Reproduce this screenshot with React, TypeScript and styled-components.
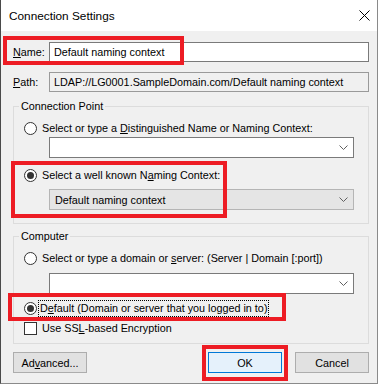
import React from "react";
import styled, { createGlobalStyle } from "styled-components";

const FONT = `"Liberation Sans", Arial, sans-serif`;

const Global = createGlobalStyle`
  html, body { margin: 0; padding: 0; background: #ffffff; }
  body { font-family: ${FONT}; font-size: 10.8px; color: #000; }
  * { box-sizing: border-box; }
`;

const Window = styled.div`
  position: relative;
  width: 378px;
  height: 384px;
  background: #f0f0f0;
  border-left: 1px solid #4a4a4a;
  border-right: 1px solid #8a8a8a;
  border-bottom: 1px solid #8a8a8a;
  display: flex;
  flex-direction: column;
  font-family: ${FONT};
  font-size: 10.8px;
`;

const TitleBar = styled.div`
  height: 31px;
  background: #ffffff;
  display: flex;
  align-items: center;
  justify-content: space-between;
  padding: 0 7px 0 8px;
  font-size: 11.8px;
`;

const Body = styled.div`
  display: flex;
  flex-direction: column;
  padding: 0 8px 0 12px;
`;

const FieldRow = styled.div<{ $mt: number }>`
  display: flex;
  align-items: center;
  margin-top: ${(p) => p.$mt}px;
`;

const FieldLabel = styled.span`
  width: 36px;
  line-height: 16px;
`;

const TextBox = styled.div<{ $readonly?: boolean }>`
  flex: 1;
  height: 20px;
  display: flex;
  align-items: center;
  padding-left: 4px;
  background: ${(p) => (p.$readonly ? "#f0f0f0" : "#ffffff")};
  border: 1px solid ${(p) => (p.$readonly ? "#9a9a9a" : "#7a7a7a")};
  white-space: nowrap;
  overflow: hidden;
`;

const Group = styled.fieldset<{ $mt: number }>`
  margin: ${(p) => p.$mt}px 0 0 0;
  padding: 0;
  border: 1px solid #dcdcdc;
  min-width: 0;
`;

const Legend = styled.legend`
  margin-left: 5px;
  padding: 0 2px;
  line-height: 16px;
`;

const GroupInner = styled.div<{ $pt: number; $pb: number }>`
  display: flex;
  flex-direction: column;
  padding: ${(p) => p.$pt}px 14px ${(p) => p.$pb}px 10px;
`;

const OptionRow = styled.div<{ $mt?: number }>`
  display: flex;
  align-items: center;
  height: 16px;
  margin-top: ${(p) => p.$mt ?? 0}px;
  white-space: nowrap;
`;

const RadioCircle = styled.span<{ $checked?: boolean }>`
  width: 13px;
  height: 13px;
  border-radius: 50%;
  border: 1px solid #333333;
  background: #ffffff;
  display: flex;
  align-items: center;
  justify-content: center;
  flex: none;
  &::after {
    content: "";
    display: ${(p) => (p.$checked ? "block" : "none")};
    width: 7px;
    height: 7px;
    border-radius: 50%;
    background: #333333;
  }
`;

const CheckBox = styled.span`
  width: 13px;
  height: 13px;
  border: 1px solid #333333;
  background: #ffffff;
  flex: none;
`;

const OptionText = styled.span<{ $focused?: boolean }>`
  margin-left: ${(p) => (p.$focused ? 1 : 3)}px;
  line-height: 15px;
  padding: 0 1px;
  border: 1px dotted ${(p) => (p.$focused ? "#000" : "transparent")};
`;

const Combo = styled.div<{ $mt: number; $disabled?: boolean }>`
  margin: ${(p) => p.$mt}px 0 0 25px;
  height: 21px;
  display: flex;
  align-items: center;
  justify-content: space-between;
  padding: 0 5px 0 5px;
  background: ${(p) => (p.$disabled ? "#e5e5e5" : "#ffffff")};
  border: 1px solid ${(p) => (p.$disabled ? "#b5b5b5" : "#7a7a7a")};
`;

const ButtonRow = styled.div`
  display: flex;
  justify-content: space-between;
  margin-top: 8px;
`;

const ButtonGroup = styled.div`
  display: flex;
  gap: 13px;
`;

const Button = styled.div<{ $default?: boolean }>`
  width: 74px;
  height: 21px;
  display: flex;
  align-items: center;
  justify-content: center;
  background: ${(p) => (p.$default ? "#e5f1fb" : "#e1e1e1")};
  border: 1px solid ${(p) => (p.$default ? "#0078d7" : "#adadad")};
`;

const Highlight = styled.div`
  position: absolute;
  border: 4px solid #ed1c24;
  pointer-events: none;
`;

const Chevron = () => (
  <svg width="9" height="5" viewBox="0 0 9 5">
    <polyline points="0.5,0.5 4.5,4.5 8.5,0.5" fill="none" stroke="#606060" strokeWidth="1" />
  </svg>
);

const CloseIcon = () => (
  <svg width="11" height="11" viewBox="0 0 11 11">
    <path d="M0.5 0.5 L10.5 10.5 M10.5 0.5 L0.5 10.5" stroke="#000" strokeWidth="1" />
  </svg>
);

const boxes = [
  { left: 2, top: 36, width: 181, height: 29 },
  { left: 10, top: 161, width: 216, height: 57 },
  { left: 7, top: 293, width: 278, height: 28 },
  { left: 201, top: 345, width: 86, height: 36 },
];

export default function App() {
  return (
    <>
      <Global />
      <Window>
        <TitleBar>
          <span>Connection Settings</span>
          <CloseIcon />
        </TitleBar>
        <Body>
          <FieldRow $mt={11}>
            <FieldLabel>
              <u>N</u>ame:
            </FieldLabel>
            <TextBox>Default naming context</TextBox>
          </FieldRow>
          <FieldRow $mt={10}>
            <FieldLabel>
              <u>P</u>ath:
            </FieldLabel>
            <TextBox $readonly>LDAP://LG0001.SampleDomain.com/Default naming context</TextBox>
          </FieldRow>

          <Group $mt={6}>
            <Legend>Connection Point</Legend>
            <GroupInner $pt={6} $pb={13}>
              <OptionRow>
                <RadioCircle />
                <OptionText>
                  Select or type a <u>D</u>istinguished Name or Naming Context:
                </OptionText>
              </OptionRow>
              <Combo $mt={1}>
                <span />
                <Chevron />
              </Combo>
              <OptionRow $mt={9}>
                <RadioCircle $checked />
                <OptionText>
                  Select a well known N<u>a</u>ming Context:
                </OptionText>
              </OptionRow>
              <Combo $mt={6} $disabled>
                <span>Default naming context</span>
                <Chevron />
              </Combo>
            </GroupInner>
          </Group>

          <Group $mt={4}>
            <Legend>Computer</Legend>
            <GroupInner $pt={6} $pb={7}>
              <OptionRow>
                <RadioCircle />
                <OptionText>
                  Select or type a domain or <u>s</u>erver: (Server | Domain [:port])
                </OptionText>
              </OptionRow>
              <Combo $mt={7}>
                <span />
                <Chevron />
              </Combo>
              <OptionRow $mt={6}>
                <RadioCircle $checked />
                <OptionText $focused>
                  D<u>e</u>fault (Domain or server that you logged in to)
                </OptionText>
              </OptionRow>
              <OptionRow $mt={4}>
                <CheckBox />
                <OptionText>
                  Use SS<u>L</u>-based Encryption
                </OptionText>
              </OptionRow>
            </GroupInner>
          </Group>

          <ButtonRow>
            <Button>
              <span>
                Ad<u>v</u>anced...
              </span>
            </Button>
            <ButtonGroup>
              <Button $default>OK</Button>
              <Button>Cancel</Button>
            </ButtonGroup>
          </ButtonRow>
        </Body>
        {boxes.map((b, i) => (
          <Highlight
            key={i}
            style={{ left: b.left, top: b.top, width: b.width, height: b.height }}
          />
        ))}
      </Window>
    </>
  );
}
